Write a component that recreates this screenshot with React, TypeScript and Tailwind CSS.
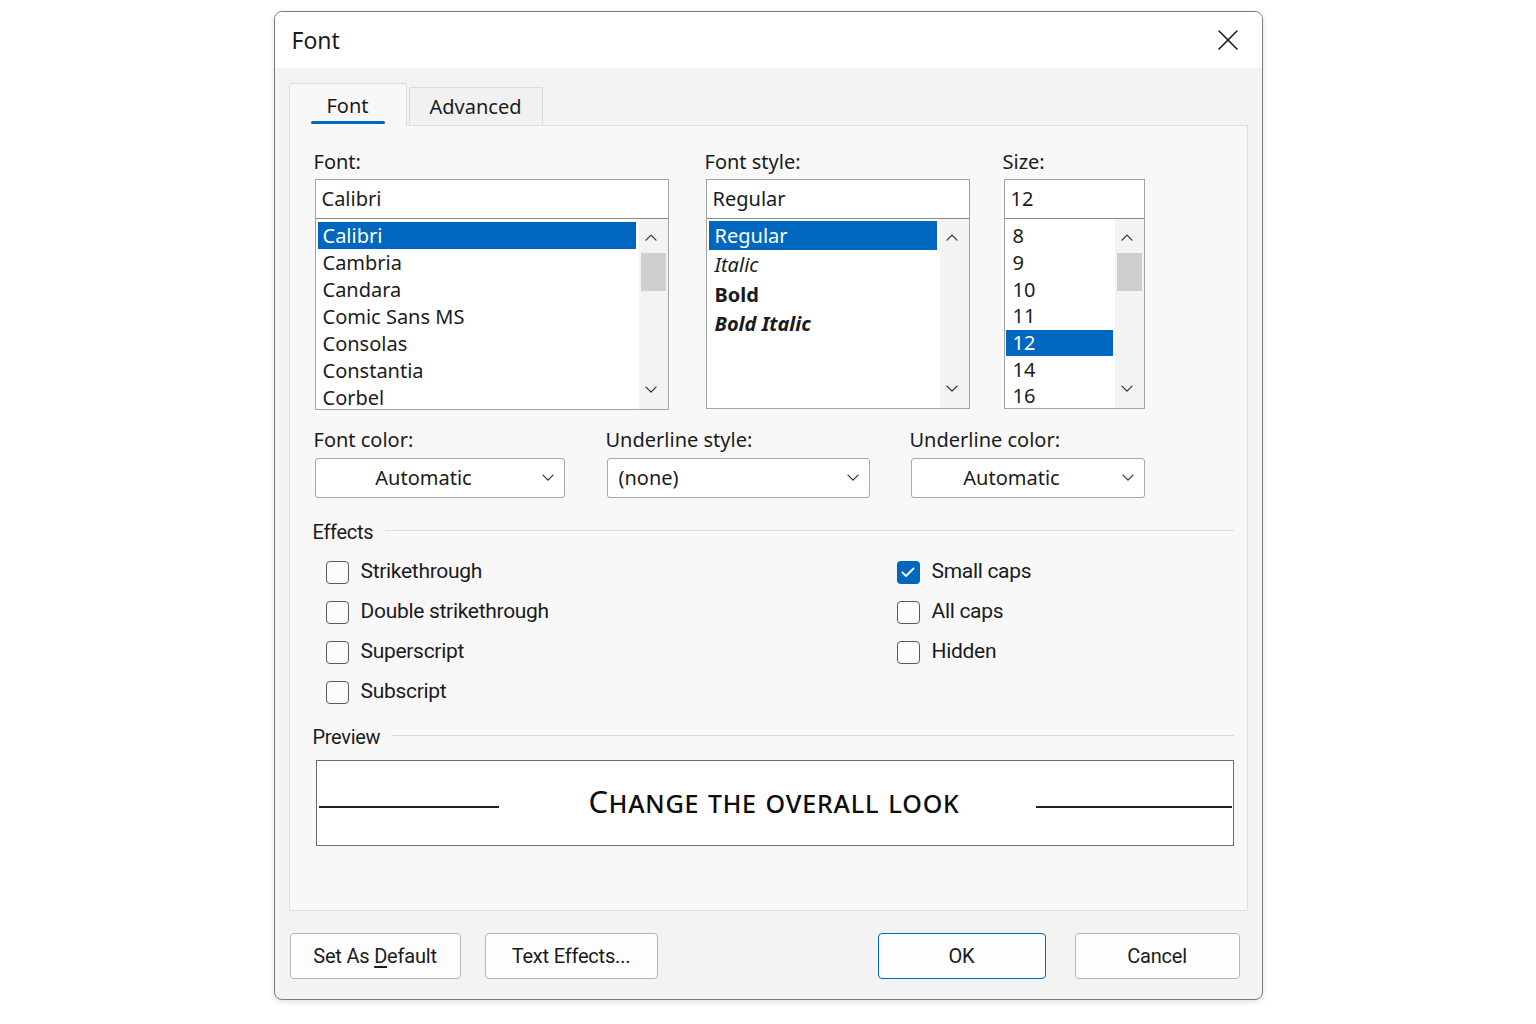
import React from "react";

const fontList = ["Calibri", "Cambria", "Candara", "Comic Sans MS", "Consolas", "Constantia", "Corbel"];
const sizeList = ["8", "9", "10", "11", "12", "14", "16"];

const Chevron = ({ up = false, w = 12, color = "#333" }: { up?: boolean; w?: number; color?: string }) => (
  <svg width={w} height={w * 0.6} viewBox="0 0 12 7" fill="none" stroke={color} strokeWidth="1.3" strokeLinecap="round" strokeLinejoin="round">
    <polyline points={up ? "1,6 6,1 11,6" : "1,1 6,6 11,1"} />
  </svg>
);

const ScrollBar = ({ thumb }: { thumb: boolean }) => (
  <div className="w-[29px] h-full bg-[#f3f3f3] flex flex-col items-stretch">
    <div className="h-[34px] flex items-center justify-center pt-[4px] pr-[4px]">
      <Chevron up />
    </div>
    {thumb && <div className="mx-[2px] h-[38px] bg-[#cfcfcf]" />}
    <div className="flex-1" />
    <div className="h-[38px] flex items-center justify-center pr-[4px]">
      <Chevron />
    </div>
  </div>
);

const Label = ({ children }: { children: React.ReactNode }) => (
  <div className="h-[28px] leading-[28px] text-[20px] -ml-px">{children}</div>
);

const Dropdown = ({ value, center = false }: { value: string; center?: boolean }) => (
  <div className="mt-[4px] h-[40px] border border-[#a8a8a8] rounded-[3px] bg-white flex items-center">
    <div className={`flex-1 text-[20px] ${center ? "text-center" : "pl-[11px]"}`}>{value}</div>
    <div className="w-[32px] flex items-center justify-center">
      <Chevron />
    </div>
  </div>
);

const Check = ({ label, checked = false }: { label: string; checked?: boolean }) => (
  <div className="h-[40px] flex items-center gap-[12px]">
    {checked ? (
      <div className="w-[23px] h-[23px] rounded-[4px] bg-[#0067c0] flex items-center justify-center">
        <svg width="14" height="11" viewBox="0 0 14 11" fill="none" stroke="white" strokeWidth="1.8" strokeLinecap="round" strokeLinejoin="round">
          <polyline points="1.5,5.5 5,9 12.5,1.5" />
        </svg>
      </div>
    ) : (
      <div className="w-[23px] h-[23px] rounded-[4px] border-[1.5px] border-[#5a5a5a] bg-[#fbfbfb]" />
    )}
    <span className="text-[21px] font-['Roboto',sans-serif] tracking-[-0.3px]">{label}</span>
  </div>
);

const SectionHead = ({ title }: { title: string }) => (
  <div className="flex items-center -ml-[2px] h-[28px]">
    <span className="text-[20px] font-['Roboto',sans-serif] tracking-[-0.3px]">{title}</span>
    <div className="flex-1 h-px bg-[#dadada] ml-[12px] -mt-[4px]" />
  </div>
);

const Button = ({ children, w, primary = false }: { children: React.ReactNode; w: string; primary?: boolean }) => (
  <div
    className={`${w} h-[46px] rounded-[4px] bg-[#fdfdfd] flex items-center justify-center text-[20px] font-['Roboto',sans-serif] tracking-[-0.2px] ${
      primary ? "border-[1.5px] border-[#0067c0]" : "border border-[#b5b5b5]"
    }`}
  >
    {children}
  </div>
);

export default function App() {
  return (
    <div className="w-full h-[1024px] bg-white flex justify-center pt-[11px] font-['Noto_Sans',sans-serif] text-[#1b1b1b]">
      <div className="w-[989px] h-[989px] border border-[#7c7c7c] rounded-[8px] overflow-hidden bg-[#f3f3f3] flex flex-col shadow-[0_2px_6px_rgba(0,0,0,0.12)]">
        {/* title bar */}
        <div className="h-[56px] bg-white flex items-center justify-between pl-[17px] pr-[24px] shrink-0">
          <span className="text-[23px]">Font</span>
          <svg width="20" height="20" viewBox="0 0 20 20" stroke="#1b1b1b" strokeWidth="1.6" strokeLinecap="round">
            <line x1="1" y1="1" x2="19" y2="19" />
            <line x1="19" y1="1" x2="1" y2="19" />
          </svg>
        </div>

        <div className="px-[14px] pt-[15px]">
          {/* tabs */}
          <div className="flex items-end h-[42px]">
            <div className="relative z-10 -mb-px w-[118px] h-[43px] bg-[#f8f8f8] border border-b-0 border-[#dedede] rounded-t-[3px] flex flex-col items-center pt-[8px]">
              <span className="text-[20px] leading-[28px]">Font</span>
              <div className="mt-[1px] w-[74px] h-[3px] rounded-full bg-[#0067c0]" />
            </div>
            <div className="ml-[2px] w-[134px] h-[38px] bg-[#f1f1f1] border border-b-0 border-[#dcdcdc] rounded-t-[2px] flex items-center justify-center">
              <span className="text-[20px]">Advanced</span>
            </div>
          </div>

          {/* panel */}
          <div className="h-[786px] border border-[#e0e0e0] bg-[#f8f8f8] pl-[25px] pr-[13px] pt-[22px]">
            {/* lists */}
            <div className="flex">
              <div className="w-[354px]">
                <Label>Font:</Label>
                <div className="mt-[3px] border border-[#a3a3a3] bg-white">
                  <div className="h-[39px] border-b border-[#8a8a8a] flex items-center pl-[6px] text-[20px]">Calibri</div>
                  <div className="h-[190px] flex overflow-hidden">
                    <div className="flex-1 pl-[2px] pt-[3px] pr-[3px] overflow-hidden">
                      {fontList.map((f, i) => (
                        <div
                          key={f}
                          className={`h-[27px] flex items-center pl-[5px] text-[20px] ${i === 0 ? "bg-[#0067c0] text-white" : ""}`}
                        >
                          {f}
                        </div>
                      ))}
                    </div>
                    <ScrollBar thumb />
                  </div>
                </div>
              </div>

              <div className="ml-[37px] w-[264px]">
                <Label>Font style:</Label>
                <div className="mt-[3px] border border-[#a3a3a3] bg-white">
                  <div className="h-[39px] border-b border-[#8a8a8a] flex items-center pl-[6px] text-[20px]">Regular</div>
                  <div className="h-[189px] flex overflow-hidden">
                    <div className="flex-1 pl-[2px] pt-[2px] pr-[3px]">
                      <div className="h-[29px] flex items-center pl-[6px] text-[20px] bg-[#0067c0] text-white">Regular</div>
                      <div className="h-[30px] flex items-center pl-[6px] text-[20px] italic">Italic</div>
                      <div className="h-[29px] flex items-center pl-[6px] text-[20px] font-bold">Bold</div>
                      <div className="h-[29px] flex items-center pl-[6px] text-[20px] font-bold italic">Bold Italic</div>
                    </div>
                    <ScrollBar thumb={false} />
                  </div>
                </div>
              </div>

              <div className="ml-[34px] w-[141px]">
                <Label>Size:</Label>
                <div className="mt-[3px] border border-[#a3a3a3] bg-white">
                  <div className="h-[39px] border-b border-[#8a8a8a] flex items-center pl-[6px] text-[20px]">12</div>
                  <div className="h-[189px] flex overflow-hidden">
                    <div className="flex-1 pl-[1px] pt-[4px] pr-[2px] overflow-hidden">
                      {sizeList.map((s) => (
                        <div
                          key={s}
                          className={`h-[26.7px] flex items-center pl-[7px] text-[20px] ${s === "12" ? "bg-[#0067c0] text-white" : ""}`}
                        >
                          {s}
                        </div>
                      ))}
                    </div>
                    <ScrollBar thumb />
                  </div>
                </div>
              </div>
            </div>

            {/* dropdowns */}
            <div className="flex mt-[16px]">
              <div className="w-[250px]">
                <Label>Font color:</Label>
                <Dropdown value="Automatic" center />
              </div>
              <div className="ml-[42px] w-[263px]">
                <Label>Underline style:</Label>
                <Dropdown value="(none)" />
              </div>
              <div className="ml-[41px] w-[234px]">
                <Label>Underline color:</Label>
                <Dropdown value="Automatic" center />
              </div>
            </div>

            {/* effects */}
            <div className="mt-[20px]">
              <SectionHead title="Effects" />
            </div>
            <div className="flex pl-[11px] mt-[6px]">
              <div className="w-[571px]">
                <Check label="Strikethrough" />
                <Check label="Double strikethrough" />
                <Check label="Superscript" />
                <Check label="Subscript" />
              </div>
              <div>
                <Check label="Small caps" checked />
                <Check label="All caps" />
                <Check label="Hidden" />
              </div>
            </div>

            {/* preview */}
            <div className="mt-[11px]">
              <SectionHead title="Preview" />
            </div>
            <div className="mt-[9px] ml-px h-[86px] border-[1.5px] border-[#6b6b6b] bg-white flex items-center">
              <div className="ml-[2px] w-[180px] h-[1.5px] bg-[#222] mt-[8px]" />
              <div className="flex-1 text-center pl-[14px] -mt-[4px] text-[31px] [font-variant:small-caps] tracking-[0.025em] font-['Noto_Sans',sans-serif] text-[#0d0d0d]">
                Change the overall look
              </div>
              <div className="w-[196px] h-[1.5px] bg-[#222] mt-[8px] mr-[1px]" />
            </div>
          </div>
        </div>

        {/* buttons */}
        <div className="flex items-center mt-[22px] pl-[15px] pr-[22px]">
          <Button w="w-[171px]">
            <span>
              Set As <span className="underline underline-offset-[3px]">D</span>efault
            </span>
          </Button>
          <div className="ml-[24px]">
            <Button w="w-[173px]">Text Effects...</Button>
          </div>
          <div className="flex-1" />
          <Button w="w-[168px]" primary>OK</Button>
          <div className="ml-[29px]">
            <Button w="w-[165px]">Cancel</Button>
          </div>
        </div>
      </div>
    </div>
  );
}
